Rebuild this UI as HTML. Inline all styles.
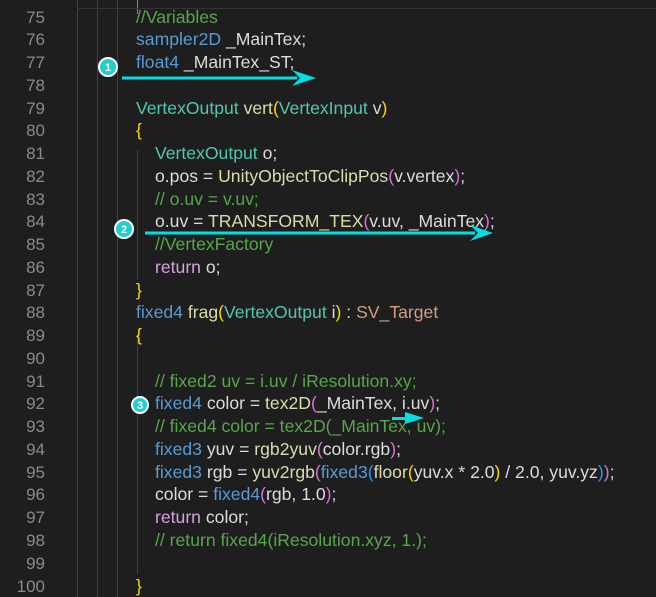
<!DOCTYPE html>
<html><head><meta charset="utf-8"><style>
html,body{margin:0;padding:0;background:#1e1e1e;width:656px;height:597px;overflow:hidden}
body{position:relative;font-family:"Liberation Sans","DejaVu Sans",sans-serif;font-size:17.6px;color:#dcdcdc}
.ln{position:absolute;left:0;width:45px;text-align:right;color:#8a8a8a;height:23px;line-height:23px;font-size:17px}
.cd{position:absolute;white-space:pre;height:23px;line-height:23px}
.g{position:absolute;width:1px;background:#404040}
.c{color:#57a64a}.k{color:#569cd6}.t{color:#4ec9b0}.f{color:#dcdcaa}.r{color:#d8a0df}.s{color:#d69d85}
.y{color:#ffd700}.p{color:#da70d6}.b{color:#179fff}
</style></head><body>
<div class="g" style="left:77px;top:0;height:597px"></div>
<div class="g" style="left:97px;top:0;height:597px"></div>
<div class="g" style="left:117px;top:0;height:597px"></div>
<div class="g" style="left:137px;top:0;height:14px;background:#888"></div>
<div class="g" style="left:137px;top:150px;height:130px"></div>
<div class="g" style="left:137px;top:334px;height:240px"></div>
<div class="g" style="left:77px;top:8px;height:1px;width:579px;background:#333"></div>
<div id="L"></div>
<script>
var lines=[
[0,'<span class="c">//Variables</span>'],
[0,'<span class="k">sampler2D</span> _MainTex;'],
[0,'<span class="k">float4</span> _MainTex_ST;'],
[0,''],
[0,'<span class="t">VertexOutput</span> <span class="f">vert</span><span class="y">(</span><span class="t">VertexInput</span> v<span class="y">)</span>'],
[0,'<span class="y">{</span>'],
[1,'<span class="t">VertexOutput</span> o;'],
[1,'o.pos = <span class="f">UnityObjectToClipPos</span><span class="p">(</span>v.vertex<span class="p">)</span>;'],
[1,'<span class="c">// o.uv = v.uv;</span>'],
[1,'o.uv = <span class="f">TRANSFORM_TEX</span><span class="p">(</span>v.uv, _MainTex<span class="p">)</span>;'],
[1,'<span class="c">//VertexFactory</span>'],
[1,'<span class="r">return</span> o;'],
[0,'<span class="y">}</span>'],
[0,'<span class="k">fixed4</span> <span class="f">frag</span><span class="y">(</span><span class="t">VertexOutput</span> i<span class="y">)</span> : <span class="s">SV_Target</span>'],
[0,'<span class="y">{</span>'],
[0,''],
[1,'<span class="c">// fixed2 uv = i.uv / iResolution.xy;</span>'],
[1,'<span class="k">fixed4</span> color = <span class="f">tex2D</span><span class="p">(</span>_MainTex, i.uv<span class="p">)</span>;'],
[1,'<span class="c">// fixed4 color = tex2D(_MainTex, uv);</span>'],
[1,'<span class="k">fixed3</span> yuv = <span class="f">rgb2yuv</span><span class="p">(</span>color.rgb<span class="p">)</span>;'],
[1,'<span class="k">fixed3</span> rgb = <span class="f">yuv2rgb</span><span class="p">(</span><span class="k">fixed3</span><span class="b">(</span><span class="f">floor</span><span class="y">(</span>yuv.x * 2.0<span class="y">)</span> / 2.0, yuv.yz<span class="b">)</span><span class="p">)</span>;'],
[1,'color = <span class="k">fixed4</span><span class="p">(</span>rgb, 1.0<span class="p">)</span>;'],
[1,'<span class="r">return</span> color;'],
[1,'<span class="c">// return fixed4(iResolution.xyz, 1.);</span>'],
[0,''],
[0,'<span class="y">}</span>']];
var h='';
for(var i=0;i<lines.length;i++){var t=5.5+i*22.76;
h+='<div class="ln" style="top:'+t+'px">'+(75+i)+'</div>';
h+='<div class="cd" style="top:'+t+'px;left:'+(136+lines[i][0]*19)+'px">'+lines[i][1]+'</div>';}
document.getElementById('L').innerHTML=h;
</script>
<svg width="656" height="597" style="position:absolute;left:0;top:0">
<g fill="#00e0e0" stroke="none">
<rect x="122" y="76.5" width="175" height="3"/><polygon points="292,70 316,78 292,86 300,78"/>
<rect x="145" y="231.5" width="330" height="3"/><polygon points="470,225 493,233 470,241 478,233"/>
<rect x="392" y="417" width="18" height="3"/><polygon points="405,412 424,418 405,424"/>
</g>
<g font-family="Liberation Sans,sans-serif" font-size="11" font-weight="bold" text-anchor="middle" fill="#fff">
<circle cx="108" cy="67" r="9" fill="#1ecfcf" stroke="#fff" stroke-width="2"/><text x="108" y="71">1</text>
<circle cx="124" cy="229" r="9" fill="#1ecfcf" stroke="#fff" stroke-width="2"/><text x="124" y="233">2</text>
<circle cx="140" cy="405" r="8" fill="#1ecfcf" stroke="#fff" stroke-width="2"/><text x="140" y="409">3</text>
</g></svg>
</body></html>
